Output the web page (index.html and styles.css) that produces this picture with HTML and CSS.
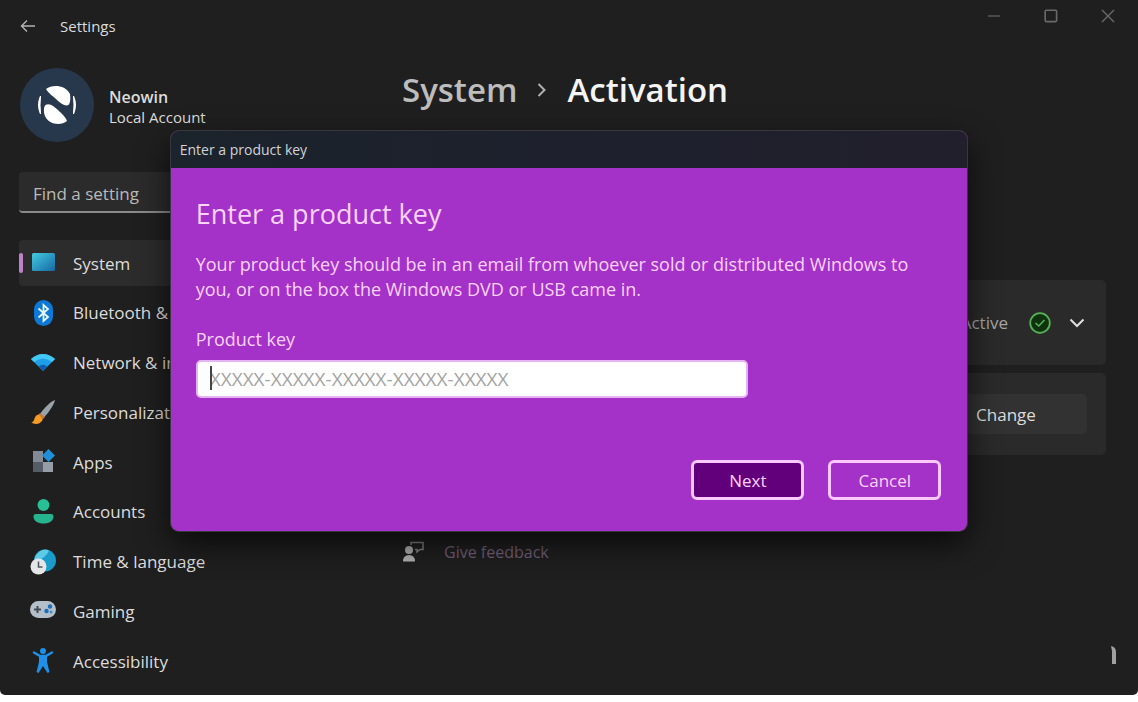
FILE: index.html
```html
<!DOCTYPE html>
<html lang="en">
<head>
  <meta charset="UTF-8">
  <meta name="viewport" content="width=device-width, initial-scale=1.0">
  <title>Settings</title>
  <link rel="stylesheet" href="styles.css">
</head>
<body>
  <div class="window">
    <header class="titlebar">
      <button class="back" aria-label="Back">
        <svg width="16" height="14" viewBox="0 0 16 14" fill="none" stroke="#b4b4b4" stroke-width="1.4"><path d="M15 7H1.5M7 1.5L1.5 7L7 12.5"/></svg>
      </button>
      <span class="app-name">Settings</span>
      <div class="caption-buttons">
        <button aria-label="Minimize"><svg width="14" height="14" viewBox="0 0 14 14" fill="none" stroke="#5c5c5c" stroke-width="1.4"><path d="M1 7H13"/></svg></button>
        <button aria-label="Maximize"><svg width="14" height="14" viewBox="0 0 14 14" fill="none" stroke="#6a6a6a" stroke-width="1.6"><rect x="1.2" y="1.2" width="11.4" height="11.4" rx="1"/></svg></button>
        <button aria-label="Close"><svg width="14" height="14" viewBox="0 0 14 14" fill="none" stroke="#6a6a6a" stroke-width="1.4"><path d="M1 1L13 13M13 1L1 13"/></svg></button>
      </div>
    </header>

    <div class="content">
      <aside class="sidebar">
        <div class="account">
          <svg class="avatar" width="74" height="74" viewBox="0 0 74 74">
            <circle cx="37" cy="37" r="37" fill="#27384c"/>
            <path d="M26 21C32 16.500 45 16.500 50 26C50.500 30 50.500 34 49 36.500C46 39 41 36 37 32C33 28 29 26 26 21Z" fill="#fff"/>
            <path d="M47 53C41 58 29 57 25 48C23.500 44 23.500 39 25.500 37C29 34.500 34 38 38 42C42 46 45 48 47 53Z" fill="#fff"/>
            <path d="M20.500 28Q16.500 37 20.500 46Q19.500 37 20.500 28Z" fill="#fff" stroke="#fff"/>
            <path d="M53.500 28Q57.500 37 53.500 46Q54.500 37 53.500 28Z" fill="#fff" stroke="#fff"/>
          </svg>
          <div class="account-text">
            <strong>Neowin</strong>
            <span>Local Account</span>
          </div>
        </div>

        <input class="search" type="text" placeholder="Find a setting" aria-label="Find a setting">

        <nav class="nav">
          <a href="#" class="nav-item active">
            <svg width="26" height="26" viewBox="0 0 26 26"><defs><linearGradient id="screen" x1="0" y1="0" x2="1" y2="1"><stop offset="0" stop-color="#43cbe0"/><stop offset="1" stop-color="#1768a5"/></linearGradient></defs><rect x="2" y="3" width="23" height="18" rx="1.500" fill="url(#screen)"/></svg>
            System
          </a>
          <a href="#" class="nav-item">
            <svg width="26" height="26" viewBox="0 0 26 26"><rect x="4" y="0" width="19" height="26" rx="9.500" fill="#0d78d6"/><path d="M8.500 8.500L18 17L13.500 21V5L18 9L8.500 17.500" fill="none" stroke="#e8f6ff" stroke-width="1.800"/></svg>
            Bluetooth &amp; devices
          </a>
          <a href="#" class="nav-item">
            <svg width="26" height="26" viewBox="0 0 26 26"><path d="M1 9Q13-1 25 9L13 21Z" fill="#1e9ee8"/><path d="M1 9Q13-1 25 9L22 12Q13 5 4 12Z" fill="#43c8f4"/><path d="M8.500 16.500Q13 13 17.500 16.500L13 21Z" fill="#0c5fae"/></svg>
            Network &amp; internet
          </a>
          <a href="#" class="nav-item">
            <svg width="26" height="26" viewBox="0 0 26 26"><path d="M25 1C21 2 14 9 10 15L14 18.500C19 13 24 6 25 1Z" fill="#9ba3aa"/><path d="M10 14L15 18L13 20L8.500 16Z" fill="#c9773a"/><path d="M9 15.500C5 16 5 19 4 21C3 23 2 23.500 1 23.500C5 26 11 25.500 13 20Z" fill="#f59a23"/></svg>
            Personalization
          </a>
          <a href="#" class="nav-item">
            <svg width="26" height="26" viewBox="0 0 26 26"><path d="M3 2H13V13H3Z" fill="#828a95"/><path d="M3 13H13V23H3Z" fill="#555c66"/><path d="M13 13H23V23H13Z" fill="#969da7"/><path d="M18.500 0L25 6.500L18.500 13L12 6.500Z" fill="#218fd6"/></svg>
            Apps
          </a>
          <a href="#" class="nav-item">
            <svg width="26" height="26" viewBox="0 0 26 26"><circle cx="13.500" cy="6" r="6" fill="#27bf94"/><path d="M5.500 15H21.500Q23.500 15 23.500 17.500C23.500 22 19 24.500 13.500 24.500S3.500 22 3.500 17.500Q3.500 15 5.500 15Z" fill="#25b48e"/></svg>
            Accounts
          </a>
          <a href="#" class="nav-item">
            <svg width="26" height="26" viewBox="0 0 26 26"><circle cx="15" cy="11.500" r="11" fill="#1b9bc9"/><path d="M9 3Q14-1 19 1.500Q16 9 5 13Q3 8 9 3Z" fill="#5dcbe6"/><circle cx="8.500" cy="17.500" r="8" fill="#e4e6e8"/><path d="M8.500 12.500V18H12.500" fill="none" stroke="#505860" stroke-width="1.500"/></svg>
            Time &amp; language
          </a>
          <a href="#" class="nav-item">
            <svg width="26" height="26" viewBox="0 0 26 26"><rect x="0" y="3" width="26" height="17" rx="8.500" fill="#b4bfca"/><path d="M4 11.500H11M7.500 8V15" stroke="#424c57" stroke-width="2"/><circle cx="20" cy="8.500" r="2.200" fill="#1870b8"/><circle cx="16.500" cy="13" r="2.200" fill="#1870b8"/><circle cx="21" cy="14" r="1.500" fill="#3b8fd0"/></svg>
            Gaming
          </a>
          <a href="#" class="nav-item">
            <svg width="26" height="26" viewBox="0 0 26 26"><circle cx="13" cy="3" r="3" fill="#1e90e8"/><path d="M4 4.500L10 8H16L22 4.500" fill="none" stroke="#1e90e8" stroke-width="2.600" stroke-linecap="round"/><path d="M9 7H17V14L19.500 24L17.500 25L13 18L8.500 25L6.500 24L9 14Z" fill="#1e90e8"/></svg>
            Accessibility
          </a>
        </nav>
      </aside>

      <main class="main">
        <h1 class="breadcrumb">
          <span class="parent">System</span>
          <svg width="10" height="16" viewBox="0 0 10 16" fill="none" stroke="#b0b0b0" stroke-width="2"><path d="M1.500 2L7.500 8L1.500 14"/></svg>
          <span>Activation</span>
        </h1>
        <section class="card">
          <span class="state">Active</span>
          <svg width="22" height="22" viewBox="0 0 22 22" fill="none" stroke="#57b157"><circle cx="11" cy="11" r="9.800" fill="#10330f" stroke-width="1.800"/><path d="M6.500 11L9.800 14L15.500 8" stroke-width="1.600"/></svg>
          <svg class="chevron" width="16" height="10" viewBox="0 0 16 10" fill="none" stroke="#dedede" stroke-width="2"><path d="M1.500 1.500L8 8L14.500 1.500"/></svg>
        </section>
        <section class="card key-card">
          <button class="change">Change</button>
        </section>
        <a href="#" class="feedback">
          <svg width="22" height="22" viewBox="0 0 22 22"><circle cx="7" cy="9" r="4" fill="#b2b2b2"/><path d="M1 20.500Q1 14 7 14T13 20.500Z" fill="#b2b2b2"/><path d="M9 4V1.500H21V8.500H18L15 11V8.500H13" fill="none" stroke="#858585" stroke-width="1.500"/></svg>
          Give feedback
        </a>
      </main>
    </div>

    <svg class="edge-mark" width="5" height="18" viewBox="0 0 5 18"><path d="M0 0Q5 1 5 6V18H1V5Z" fill="#a0a0a0"/></svg>

    <div class="overlay">
      <div class="dialog" role="dialog" aria-labelledby="dialog-title">
        <div class="dialog-titlebar">Enter a product key</div>
        <form class="dialog-body">
          <h2 id="dialog-title">Enter a product key</h2>
          <p>Your product key should be in an email from whoever sold or distributed Windows to you, or on the box the Windows DVD or USB came in.</p>
          <label for="product-key">Product key</label>
          <div class="key-field">
            <input id="product-key" type="text" placeholder="XXXXX-XXXXX-XXXXX-XXXXX-XXXXX">
            <span class="caret"></span>
          </div>
          <div class="actions">
            <button type="button" class="next">Next</button>
            <button type="button">Cancel</button>
          </div>
        </form>
      </div>
    </div>
  </div>
</body>
</html>
```
FILE: styles.css
```css
* {
  box-sizing: border-box;
}
body {
  margin: 0;
  background: #fff;
  color: #dcdcdc;
  font-family: "Open Sans", "Segoe UI", sans-serif;
  font-size: 17px;
}
button, input {
  font: inherit;
  color: inherit;
}
a {
  color: inherit;
  text-decoration: none;
}
h1, h2, p {
  margin: 0;
}
svg {
  flex: none;
}
.window {
  position: relative;
  display: flex;
  flex-direction: column;
  min-height: calc(100vh - 7px);
  background: #1f1f1f;
  border-radius: 0 0 5px 5px;
}

/* title bar */
.titlebar {
  display: flex;
  align-items: center;
  height: 52px;
  padding-left: 20px;
}
.titlebar button {
  display: flex;
  padding: 0;
  border: none;
  background: none;
}
.app-name {
  margin-left: 24px;
  font-size: 15px;
}
.caption-buttons {
  display: flex;
  align-self: flex-start;
  gap: 43px;
  margin-left: auto;
  padding: 9px 23px 0 0;
}

/* sidebar */
.content {
  display: flex;
  flex: 1;
}
.sidebar {
  display: flex;
  flex-direction: column;
  width: 363px;
  margin-right: 39px;
  padding: 16px 0 11px 19px;
}
.account {
  display: flex;
  align-items: center;
  gap: 15px;
  padding-left: 1px;
}
.account-text {
  display: flex;
  flex-direction: column;
  padding-top: 4px;
  font-size: 15px;
  line-height: 20px;
}
.account-text strong {
  font-size: 16px;
  font-weight: 600;
}
.search {
  height: 41px;
  margin: 30px 0 27px;
  padding: 3px 14px 0;
  border: none;
  border-bottom: 2px solid #8a8a8a;
  border-radius: 4px;
  background: #2b2b2b;
}
.search::placeholder {
  color: #bababa;
  opacity: 1;
}
.nav {
  display: flex;
  flex: 1;
  flex-direction: column;
  justify-content: space-between;
}
.nav-item {
  position: relative;
  display: flex;
  align-items: center;
  gap: 17px;
  height: 46px;
  padding-left: 11px;
  border-radius: 4px;
}
.nav-item.active {
  background: #2c2c2c;
}
.nav-item.active::before {
  content: "";
  position: absolute;
  top: 13px;
  left: 0;
  width: 4px;
  height: 20px;
  border-radius: 2px;
  background: #bd83c5;
}

/* main column */
.main {
  flex: 1;
  padding: 16px 32px 0 0;
}
.breadcrumb {
  display: flex;
  align-items: center;
  gap: 20px;
  margin-bottom: 168px;
  font-size: 33px;
  font-weight: 600;
  line-height: 44px;
  color: #f4f4f4;
}
.parent {
  color: #bdbdbd;
}
.card {
  display: flex;
  align-items: center;
  justify-content: flex-end;
  height: 85px;
  margin-bottom: 8px;
  padding: 0 21px;
  border-radius: 5px;
  background: #2a2a2a;
}
.key-card {
  height: 82px;
  padding: 0 19px;
}
.state {
  margin-right: 21px;
  color: #a6a6a6;
}
.chevron {
  margin-left: 18px;
}
.change {
  width: 162px;
  height: 40px;
  border: none;
  border-radius: 5px;
  background: #323232;
}
.feedback {
  display: flex;
  align-items: center;
  gap: 20px;
  margin-top: 86px;
  font-size: 16px;
  color: #755f7a;
}
.edge-mark {
  position: absolute;
  right: 22px;
  bottom: 31px;
}

/* product key dialog */
.overlay {
  position: absolute;
  inset: 0;
  display: flex;
  align-items: flex-start;
  justify-content: center;
  padding-top: 131px;
}
.dialog {
  width: 70%;
  overflow: hidden;
  border-radius: 8px;
  background: #a431c8;
  color: #fbd3ff;
  box-shadow: 0 0 0 1px #3a363d, 0 12px 32px rgba(0, 0, 0, 0.7);
}
.dialog-titlebar {
  padding-left: 9px;
  background: linear-gradient(90deg, #1b232b, #1e202d 60%, #221f2c);
  color: #d2d2d8;
  font-size: 14px;
  line-height: 37px;
}
.dialog-body {
  padding: 26px 26px 31px 25px;
}
.dialog-body h2 {
  margin-bottom: 18px;
  font-size: 27px;
  font-weight: 400;
  line-height: 40px;
}
.dialog-body p {
  max-width: 730px;
  margin-bottom: 25px;
  font-size: 18px;
  line-height: 25px;
}
.dialog-body label {
  display: block;
  margin-bottom: 8px;
  font-size: 18px;
  line-height: 25px;
}
.key-field {
  position: relative;
  width: 552px;
}
.key-field input {
  display: block;
  width: 100%;
  height: 38px;
  padding: 0 12px;
  border: 2px solid #e6b4f0;
  border-radius: 5px;
  background: #fff;
  color: #222;
  font-size: 19px;
}
.key-field input::placeholder {
  color: #a3a3a3;
  opacity: 1;
}
.caret {
  position: absolute;
  top: 6px;
  left: 14px;
  width: 2px;
  height: 24px;
  background: #444;
}
.actions {
  display: flex;
  justify-content: flex-end;
  gap: 24px;
  margin-top: 62px;
}
.actions button {
  width: 113px;
  height: 40px;
  padding: 0;
  border: 3px solid #fbc8ff;
  border-radius: 6px;
  background: none;
}
.actions .next {
  background: #62007b;
}
```
